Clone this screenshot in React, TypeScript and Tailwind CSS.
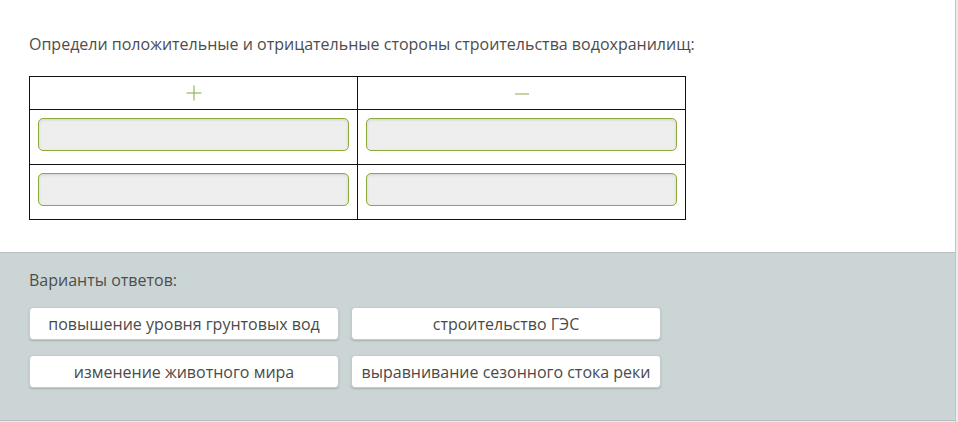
import React from "react";

const font = { fontFamily: '"Open Sans", "Noto Sans", sans-serif' };

function Drop() {
  return (
    <div className="h-[33px] w-full rounded-[5px] border border-[#8cab3c] bg-[#eeeeee] shadow-[inset_0_1px_3px_rgba(0,0,0,0.12)]" />
  );
}

function Opt({ children }: { children: React.ReactNode }) {
  return (
    <div className="flex h-[33px] w-[310px] items-center justify-center rounded-[4px] border border-[#c4cccc] bg-white text-[16px] text-[#4a4a4a] shadow-[0_1px_2px_rgba(0,0,0,0.18)]">
      {children}
    </div>
  );
}

export default function App() {
  return (
    <div className="flex h-[422px] w-[958px] bg-[#ececec]" style={font}>
      <div className="flex w-[956px] flex-col border-r border-[#c4c4c4]">
        <div className="h-[252px] bg-white pl-[29px] pt-[33px]">
          <div className="text-[16px] leading-[22px] text-[#4d4d4d]">
            Определи положительные и отрицательные стороны строительства водохранилищ:
          </div>
          <table className="mt-[21px] w-[657px] border-collapse">
            <tbody>
              <tr className="h-[33px]">
                <td className="w-[328px] border border-[#111] p-0">
                  <div className="flex justify-center">
                    <svg width="16" height="16" viewBox="0 0 16 16">
                      <path d="M8 0.5V15.5M0.5 8H15.5" stroke="#82ab3c" strokeWidth="1" fill="none" />
                    </svg>
                  </div>
                </td>
                <td className="border border-[#111] p-0">
                  <div className="flex justify-center pt-[2px]">
                    <svg width="14" height="4" viewBox="0 0 14 4">
                      <path d="M0 2H14" stroke="#8aa84a" strokeWidth="1" fill="none" />
                    </svg>
                  </div>
                </td>
              </tr>
              {[0, 1].map((i) => (
                <tr key={i} className="h-[55px]">
                  <td className="border border-[#111] px-[8px] pb-[13px] pt-[8px] align-top">
                    <Drop />
                  </td>
                  <td className="border border-[#111] px-[8px] pb-[13px] pt-[8px] align-top">
                    <Drop />
                  </td>
                </tr>
              ))}
            </tbody>
          </table>
        </div>
        <div className="flex h-[169px] flex-col border-y border-[#b5bfbf] bg-[#cbd5d5] pl-[29px] pt-[16px]">
          <div className="text-[16px] leading-[22px] text-[#4d4d4d]">Варианты ответов:</div>
          <div className="mt-[16px] grid w-[632px] grid-cols-2 gap-x-[12px] gap-y-[15px]">
            <Opt>повышение уровня грунтовых вод</Opt>
            <Opt>строительство ГЭС</Opt>
            <Opt>изменение животного мира</Opt>
            <Opt>выравнивание сезонного стока реки</Opt>
          </div>
        </div>
      </div>
    </div>
  );
}
